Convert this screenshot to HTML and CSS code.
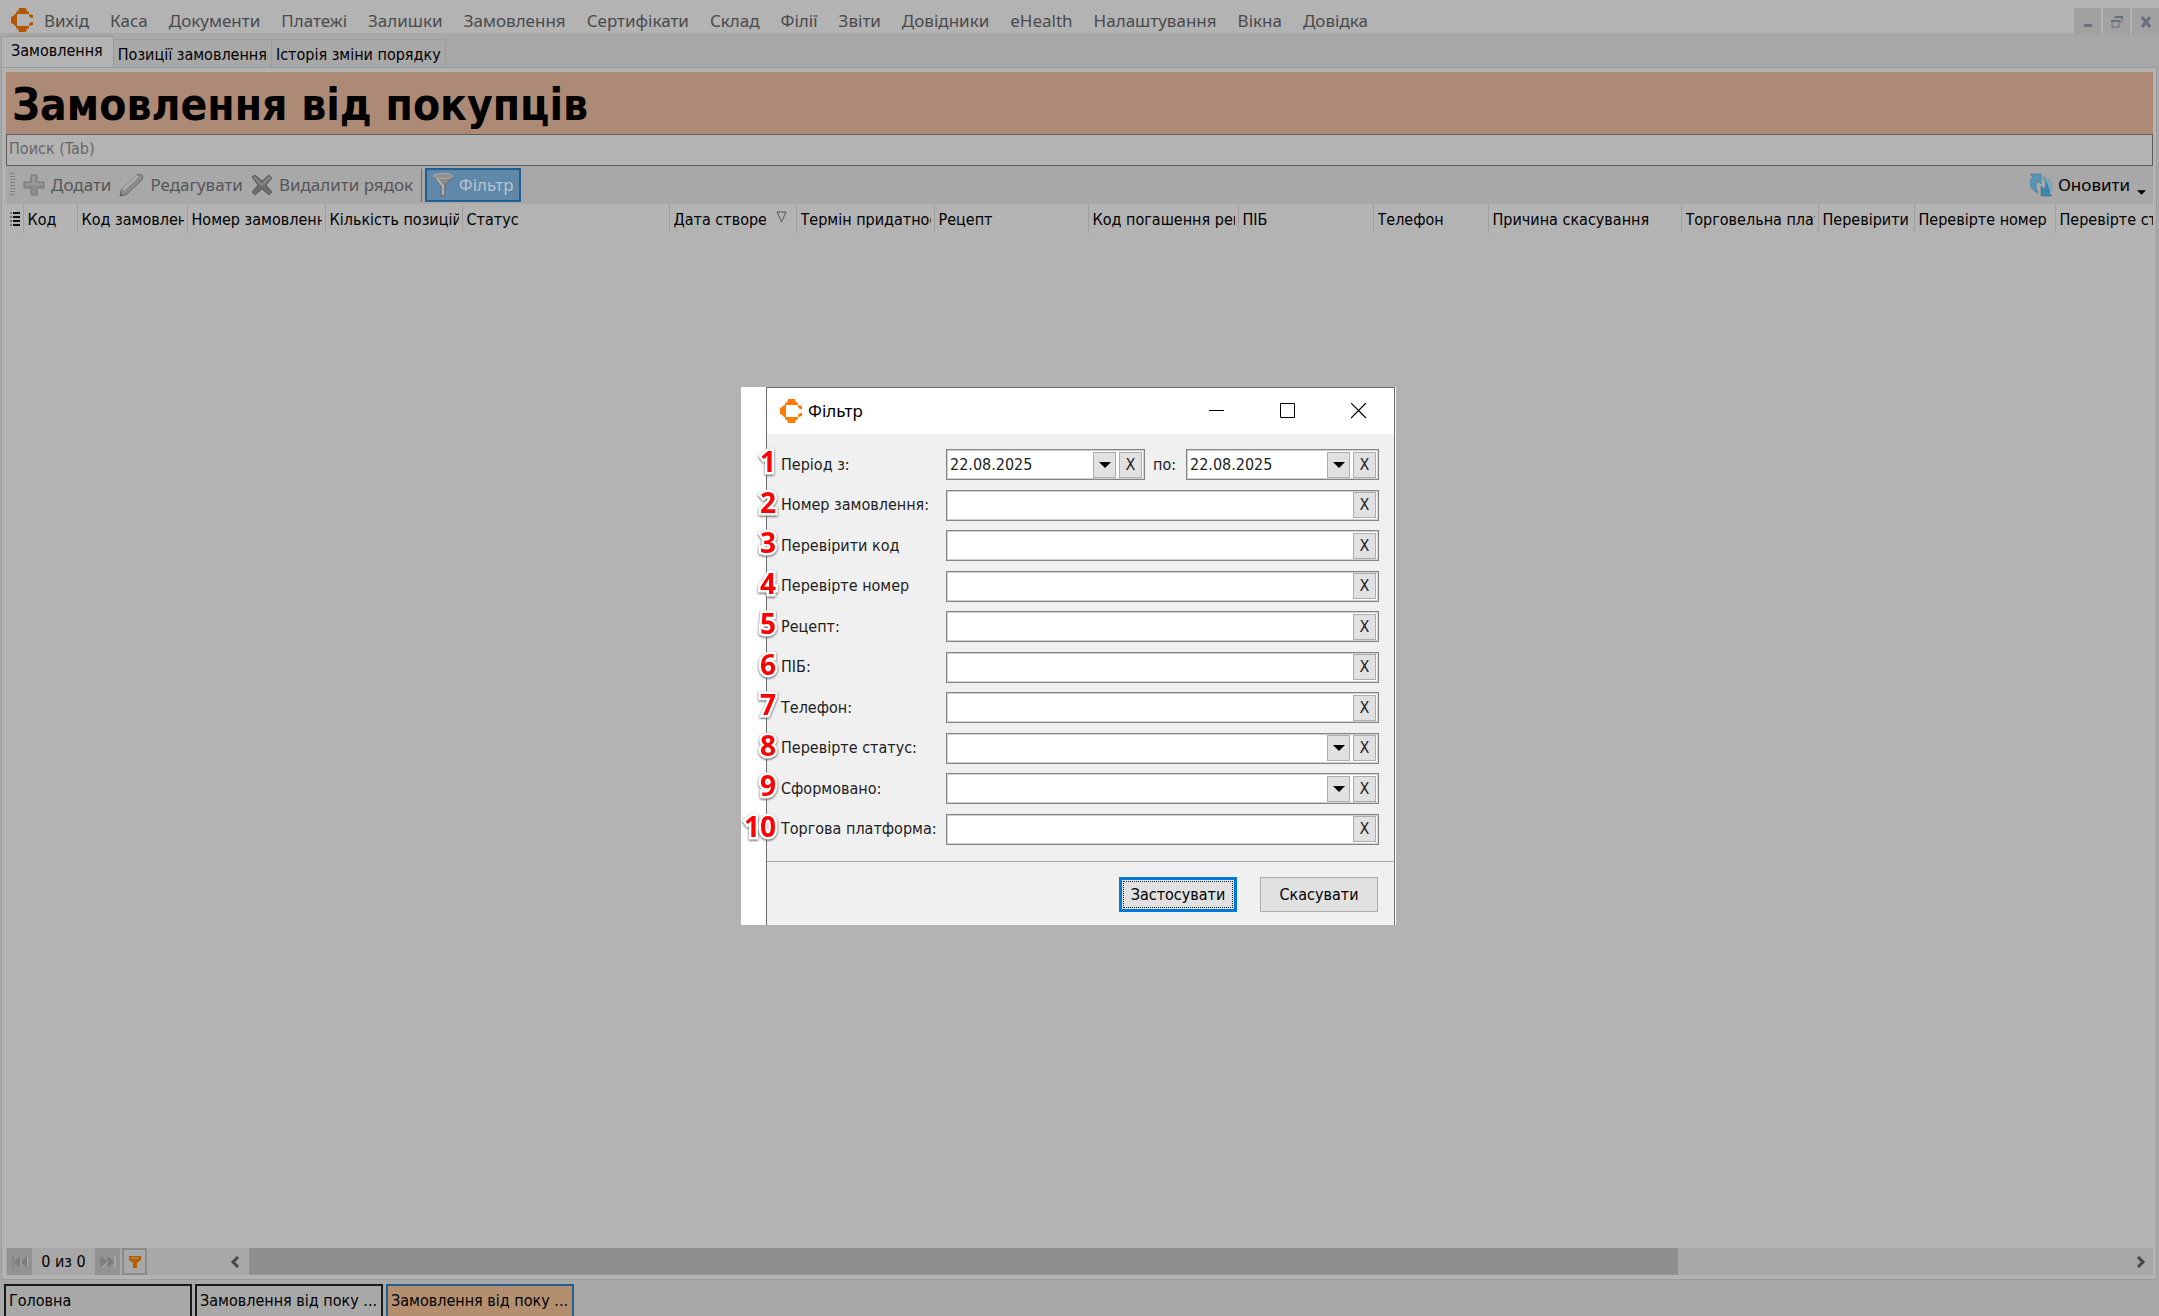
FILE: index.html
```html
<!DOCTYPE html>
<html lang="uk">
<head>
<meta charset="utf-8">
<meta name="viewport" content="width=device-width, initial-scale=1">
<title>Замовлення від покупців</title>
<link rel="stylesheet" href="styles.css">
</head>
<body>
<svg class="defs" aria-hidden="true">
  <symbol id="logo" viewBox="0 0 22 24">
    <path d="M5 6V4Q8 3 8 0h7q0 3 3 4v2zM5 18h13v2q-3 1-3 4H8q0-3-3-4zM6 6v12H4q-1-2-4-3V9q3-1 4-3zM18 6l4 1v3h-2l-2-2zM18 18l4-1v-3h-2l-2 2z"/>
  </symbol>
  <symbol id="caret" viewBox="0 0 12 6"><path d="M0 0h12L6 6z"/></symbol>
</svg>

<div class="app">
  <header class="menubar">
    <svg class="logo logo-dim" aria-hidden="true"><use href="#logo"/></svg>
    <nav class="menu" aria-label="Меню">
      <a href="#">Вихід</a><a href="#">Каса</a><a href="#">Документи</a><a href="#">Платежі</a><a href="#">Залишки</a><a href="#">Замовлення</a><a href="#">Сертифікати</a><a href="#">Склад</a><a href="#">Філії</a><a href="#">Звіти</a><a href="#">Довідники</a><a href="#">eHealth</a><a href="#">Налаштування</a><a href="#">Вікна</a><a href="#">Довідка</a>
    </nav>
    <div class="child-controls">
      <button type="button" aria-label="Згорнути"><svg width="12" height="12" viewBox="0 0 12 12"><path d="M2 8h8v3H2z" fill="#66717c"/></svg></button>
      <button type="button" aria-label="Відновити"><svg width="12" height="12" viewBox="0 0 12 12"><path d="M4 3V1h7v5H9M1 5h7v6H1z" fill="none" stroke="#66717c" stroke-width="1"/><path d="M4 0h8v2H4zM0 4h9v2H0z" fill="#66717c"/></svg></button>
      <button type="button" aria-label="Закрити"><svg width="12" height="12" viewBox="0 0 12 12"><path d="M2 1l8 10M10 1L2 11" stroke="#66717c" stroke-width="3"/></svg></button>
    </div>
  </header>

  <div class="tabs" role="tablist">
    <button class="tab tab-active" type="button" role="tab" aria-selected="true">Замовлення</button>
    <button class="tab" type="button" role="tab">Позиції замовлення</button>
    <button class="tab" type="button" role="tab">Історія зміни порядку</button>
  </div>

  <main class="panel">
    <h1 class="title">Замовлення від покупців</h1>
    <input class="search" type="search" placeholder="Поиск (Tab)" aria-label="Поиск">

    <div class="toolbar">
      <span class="grip"></span>
      <button class="tool" type="button"><svg width="22" height="22" viewBox="0 0 22 22"><path d="M8 1h6v7h7v6h-7v7H8v-7H1V8h7z" fill="#8c8c8c" stroke="#787878"/><path d="M9 2h3v7h8v2H2V9h7z" fill="#999"/></svg>Додати</button>
      <button class="tool" type="button"><svg width="25" height="24" viewBox="0 0 25 24"><path d="M1 23l1-6L18 2q2-2 5 0 2 2 0 5L7 22z" fill="#8a8a8a" stroke="#6e6e6e"/><path d="M4 17L19 3" stroke="#acacac" stroke-width="3"/><path d="M1 23l1-3 2 2z" fill="#555"/></svg>Редагувати</button>
      <button class="tool" type="button"><svg width="22" height="22" viewBox="0 0 22 22"><path d="M1 3l3-2 7 6 7-6 3 3-6 7 6 7-3 3-7-6-7 6-3-3 6-7z" fill="#6c6c6c" stroke="#5e5e5e"/><path d="M3 3l8 8 8-8" fill="none" stroke="#868686" stroke-width="2"/></svg>Видалити рядок</button>
      <span class="divider"></span>
      <button class="tool tool-on" type="button"><svg width="20" height="24" viewBox="0 0 20 24"><path d="M0 3l8 10v10l4-1v-9l8-10z" fill="#8a8a8a" stroke="#5e5e5e" stroke-width=".7"/><path d="M4 6l6 7v9" fill="none" stroke="#b0b0b0" stroke-width="2"/><ellipse cx="10" cy="3" rx="9.500" ry="2.500" fill="#909090" stroke="#b0b0b0"/></svg>Фільтр</button>
      <button class="tool refresh" type="button"><svg width="22" height="24" viewBox="0 0 22 24"><path d="M0 1h11v10L8 8q-4 4 0 12-8-4-8-10 0-3 3-6z" fill="#5a95b8" stroke="#3d7290" stroke-width=".6"/><path d="M22 23H11V13l3 3q4-4-1-12 9 3 9 10 0 3-3 6z" fill="#3c86b0" stroke="#3d7290" stroke-width=".6"/><path d="M13 4q9 3 9 10 0 3-2 5-1-8-7-15z" fill="#83aac0"/></svg>Оновити</button>
      <button class="more" type="button" aria-label="Ще"><svg width="9" height="5"><use href="#caret"/></svg></button>
    </div>

    <div class="grid">
      <table class="orders">
        <colgroup><col class="w17"><col class="w54"><col class="w110"><col class="w138"><col class="w137"><col class="w207"><col class="w127"><col class="w138"><col class="w154"><col class="w150"><col class="w135"><col class="w115"><col class="w193"><col class="w137"><col class="w96"><col class="w141"><col></colgroup>
        <thead>
          <tr>
            <th class="mark"><svg width="10" height="14" viewBox="0 0 10 14"><path d="M3 1h7M3 5h7M3 9h7M3 13h7" stroke="#111" stroke-width="2"/><path d="M0 1h2M0 5h2M0 9h2M0 13h2" stroke="#333"/></svg></th>
            <th><span>Код</span></th><th><span>Код замовлення</span></th><th><span>Номер замовлення</span></th><th><span>Кількість позицій</span></th><th><span>Статус</span></th>
            <th class="sorted"><span>Дата створення</span><svg width="11" height="12" viewBox="0 0 11 12"><path d="M1 1h9L5.500 11z" fill="none" stroke="#555"/></svg></th>
            <th><span>Термін придатності</span></th><th><span>Рецепт</span></th><th><span>Код погашення рецепта</span></th><th><span>ПІБ</span></th><th><span>Телефон</span></th><th><span>Причина скасування</span></th><th><span>Торговельна платформа</span></th><th><span>Перевірити код</span></th><th><span>Перевірте номер</span></th><th class="last"><span>Перевірте статус</span></th>
          </tr>
        </thead>
      </table>
    </div>

    <footer class="pager">
      <button class="nav" type="button" aria-label="На початок"><svg width="16" height="12" viewBox="0 0 16 12"><path d="M1 0v12M8 1L2 6l6 5zM15 1L9 6l6 5z" fill="#7d7d7d" stroke="#7d7d7d"/><path d="M9 1v10M15.500 1v10" stroke="#b0b0b0"/></svg></button>
      <span class="count">0 из 0</span>
      <button class="nav" type="button" aria-label="В кінець"><svg width="16" height="12" viewBox="0 0 16 12"><path d="M1 1l6 5-6 5zM8 1l6 5-6 5z" fill="#7d7d7d" stroke="#7d7d7d"/><path d="M15 0v12M8 6l-7 6" stroke="#b0b0b0"/></svg></button>
      <button class="nav nav-filter" type="button" aria-label="Фільтр"><svg width="12" height="12" viewBox="0 0 12 12"><path d="M0 0h12v4L8 7v5H4V7L0 4z" fill="#b35c00"/><path d="M2 2h8" stroke="#c8a070"/></svg></button>
      <div class="scroll">
        <button class="arrow" type="button" aria-label="Ліворуч"><svg width="10" height="12" viewBox="0 0 10 12"><path d="M8 1L3 6l5 5" fill="none" stroke="#464646" stroke-width="3"/></svg></button>
        <div class="track"><div class="thumb"></div></div>
        <button class="arrow arrow-end" type="button" aria-label="Праворуч"><svg width="10" height="12" viewBox="0 0 10 12"><path d="M2 1l5 5-5 5" fill="none" stroke="#464646" stroke-width="3"/></svg></button>
      </div>
    </footer>
  </main>

  <nav class="windows" aria-label="Вікна">
    <button type="button">Головна</button>
    <button type="button">Замовлення від поку ...</button>
    <button class="current" type="button">Замовлення від поку ...</button>
  </nav>
</div>

<section class="popup" role="dialog" aria-labelledby="filter-title">
  <div class="window">
    <header class="window-bar">
      <svg class="logo" aria-hidden="true"><use href="#logo"/></svg>
      <h2 id="filter-title">Фільтр</h2>
      <button type="button" aria-label="Згорнути"><svg width="16" height="16"><path d="M0 7h15v1H0z"/></svg></button>
      <button type="button" aria-label="Розгорнути"><svg width="16" height="16"><path d="M.5.5h14v14H.5z" fill="none" stroke="#000"/></svg></button>
      <button type="button" aria-label="Закрити"><svg width="16" height="16"><path d="M0 0l15 15M15 0L0 15" stroke="#000" stroke-width="1.200"/></svg></button>
    </header>
    <form class="filter">
      <div class="rows">
        <div class="row"><b class="badge">1</b><label for="from">Період з:</label>
          <div class="field"><input id="from" type="text" value="22.08.2025"><button class="key" type="button" aria-label="Вибрати"><svg width="12" height="6"><use href="#caret"/></svg></button><button class="key" type="button">X</button></div>
          <label class="to" for="to">по:</label>
          <div class="field field-to"><input id="to" type="text" value="22.08.2025"><button class="key" type="button" aria-label="Вибрати"><svg width="12" height="6"><use href="#caret"/></svg></button><button class="key" type="button">X</button></div>
        </div>
        <div class="row"><b class="badge">2</b><label for="number">Номер замовлення:</label><div class="field"><input id="number" type="text"><button class="key" type="button">X</button></div></div>
        <div class="row"><b class="badge">3</b><label for="check-code">Перевірити код</label><div class="field"><input id="check-code" type="text"><button class="key" type="button">X</button></div></div>
        <div class="row"><b class="badge">4</b><label for="check-number">Перевірте номер</label><div class="field"><input id="check-number" type="text"><button class="key" type="button">X</button></div></div>
        <div class="row"><b class="badge">5</b><label for="recipe">Рецепт:</label><div class="field"><input id="recipe" type="text"><button class="key" type="button">X</button></div></div>
        <div class="row"><b class="badge">6</b><label for="person">ПІБ:</label><div class="field"><input id="person" type="text"><button class="key" type="button">X</button></div></div>
        <div class="row"><b class="badge">7</b><label for="phone">Телефон:</label><div class="field"><input id="phone" type="text"><button class="key" type="button">X</button></div></div>
        <div class="row"><b class="badge">8</b><label for="status">Перевірте статус:</label><div class="field"><select id="status"><option></option></select><span class="key"><svg width="12" height="6"><use href="#caret"/></svg></span><button class="key" type="button">X</button></div></div>
        <div class="row"><b class="badge">9</b><label for="formed">Сформовано:</label><div class="field"><select id="formed"><option></option></select><span class="key"><svg width="12" height="6"><use href="#caret"/></svg></span><button class="key" type="button">X</button></div></div>
        <div class="row"><b class="badge">10</b><label for="platform">Торгова платформа:</label><div class="field"><input id="platform" type="text"><button class="key" type="button">X</button></div></div>
      </div>
      <div class="actions">
        <button class="action action-default" type="button"><span>Застосувати</span></button>
        <button class="action" type="button">Скасувати</button>
      </div>
    </form>
  </div>
</section>
</body>
</html>
```
FILE: styles.css
```css
:root {
  --ui: "DejaVu Sans Condensed", "DejaVu Sans", sans-serif;
  --menu: "Noto Sans", "Open Sans", sans-serif;
  --light: #b3b3b3;
  --face: #a8a8a8;
  --line: #9b9b9b;
}

* { box-sizing: border-box; }

body {
  margin: 0;
  background: var(--face);
  color: #000;
  font: 16px/20px var(--ui);
}

button, input, select {
  margin: 0;
  padding: 0;
  border: 0;
  border-radius: 0;
  background: none;
  color: inherit;
  font: inherit;
}

button { display: flex; align-items: center; justify-content: center; }
svg { flex: none; display: block; }
.defs { position: absolute; width: 0; height: 0; }

.app { display: flex; flex-direction: column; min-height: 100vh; overflow: hidden; }

/* Menu bar */
.menubar {
  display: flex;
  align-items: flex-start;
  height: 33px;
  padding: 8px 0 0 11px;
  background: var(--light);
}
.logo { width: 22px; height: 24px; fill: #ff7a00; }
.logo-dim { fill: #b35600; }
.menu { display: flex; gap: 21px; flex: 1; padding-left: 11px; font: 17px/26px var(--menu); }
.menu a { color: #4a4a4a; text-decoration: none; white-space: nowrap; }
.child-controls { display: flex; gap: 2px; }
.child-controls button { width: 27px; height: 27px; background: #a2a2a2; }

/* Tabs */
.tabs { display: flex; align-items: flex-end; height: 34px; padding-left: 1px; }
.tab {
  height: 28px;
  padding: 2px 4px 0;
  border: 1px solid var(--line);
  border-width: 1px 1px 0 0;
  white-space: nowrap;
}
.tab-active {
  height: 31px;
  padding: 0 10px 2px 9px;
  border-left-width: 1px;
  background: var(--light);
}

/* Work panel */
.panel {
  display: flex;
  flex: 1;
  flex-direction: column;
  margin: 0 2px 0 1px;
  padding: 4px 3px 4px 4px;
  border: 1px solid var(--line);
  background: var(--light);
}
.title {
  margin: 0;
  padding: 6px 6px 2px;
  background: #ad8a76;
  font: bold 44px/54px var(--ui);
}
.search {
  width: 100%;
  height: 32px;
  padding: 0 2px 3px;
  border: 1px solid #5c5c5c;
  outline: 0;
  appearance: none;
}
.search::placeholder { color: #666; opacity: 1; }

.toolbar {
  display: flex;
  align-items: center;
  height: 38px;
  padding-left: 4px;
  background: var(--face);
  font: 17px/24px var(--menu);
}
.grip { width: 5px; height: 24px; background: repeating-linear-gradient(#7e7e7e 0 1px, transparent 1px 3px); }
.tool { gap: 6px; height: 34px; margin-left: 8px; color: #565656; white-space: nowrap; }
.divider { width: 1px; height: 33px; margin: 0 3px 0 8px; background: #6c6c6c; }
.tool-on {
  width: 96px;
  margin-left: 0;
  border: 2px solid #1f5f92;
  background: #6088a8;
  color: #b4c4d2;
}
.refresh { margin-left: auto; color: #000; }
.more { width: 23px; height: 34px; padding-top: 14px; }

/* Grid */
.grid { flex: 1; }
.orders { width: 100%; border-collapse: collapse; table-layout: fixed; }
.orders th {
  height: 29px;
  padding: 2px 3px 0 4px;
  border-right: 1px solid #a1a1a1;
  font-weight: normal;
  text-align: left;
}
.orders span { display: block; overflow: hidden; white-space: nowrap; }
.orders .mark { padding: 0 4px; }
.orders .last { padding-right: 0; border-right: 0; }
.orders .sorted { position: relative; padding-right: 30px; }
.sorted svg { position: absolute; top: 7px; right: 9px; }
.w17 { width: 17px; }
.w54 { width: 54px; }
.w96 { width: 96px; }
.w110 { width: 110px; }
.w115 { width: 115px; }
.w127 { width: 127px; }
.w135 { width: 135px; }
.w137 { width: 137px; }
.w138 { width: 138px; }
.w141 { width: 141px; }
.w150 { width: 150px; }
.w154 { width: 154px; }
.w193 { width: 193px; }
.w207 { width: 207px; }

/* Record navigator and scroll bar */
.pager { display: flex; height: 27px; padding-left: 1px; background: var(--face); }
.nav { width: 25px; background: #929292; }
.nav-filter { margin-left: 2px; border: 2px solid #8a8a8a; background: var(--face); }
.count { width: 63px; line-height: 28px; text-align: center; }
.scroll { display: flex; flex: 1; margin-left: 74px; }
.arrow { width: 28px; }
.arrow-end { width: 24px; }
.track { flex: 1; }
.thumb { width: 76%; height: 100%; background: #8f8f8f; }

/* Open windows */
.windows { display: flex; gap: 3px; height: 36px; padding: 4px 4px 0; }
.windows button {
  justify-content: flex-start;
  width: 188px;
  padding: 0 3px;
  border: 2px solid #1a1a1a;
  border-bottom: 0;
  white-space: nowrap;
}
.windows .current { border-color: #24608f; background: #b38f70; }

/* Filter window */
.popup {
  position: absolute;
  top: 387px;
  left: 741px;
  width: 655px;
  padding: 0 1px 0 25px;
  background: #fff;
}
.window { border: 1px solid #6e6e6e; border-bottom: 0; background: #f0f0f0; }
.window-bar { display: flex; align-items: center; height: 46px; padding-left: 13px; background: #fff; }
.window-bar h2 { flex: 1; margin: 0 0 0 6px; font: 17px/24px var(--menu); }
.window-bar button { width: 71px; height: 46px; }

.rows {
  display: flex;
  flex-direction: column;
  justify-content: space-between;
  height: 428px;
  padding: 15px 15px 16px 14px;
  border-bottom: 1px solid #a8a8a8;
}
.row { position: relative; display: flex; align-items: center; color: #222; }
.row label { width: 165px; white-space: nowrap; }
.row .to { width: 41px; padding-left: 8px; }
.field {
  display: flex;
  flex: 1;
  align-items: center;
  gap: 3px;
  height: 31px;
  padding: 0 2px 0 3px;
  border: 1px solid #858585;
  outline: 1px solid #d0d0d0;
  outline-offset: -2px;
  background: #fff;
}
.field-to { flex: 0 0 193px; }
.field input, .field select { flex: 1; width: 0; height: 25px; outline: 0; appearance: none; }
.key {
  display: flex;
  align-items: center;
  justify-content: center;
  width: 23px;
  height: 26px;
  border: 1px solid #adadad;
  background: #e1e1e1;
}
.badge {
  position: absolute;
  right: calc(100% + 5px);
  top: -6px;
  color: #f00;
  font: bold 28px/36px "Open Sans", "Noto Sans", sans-serif;
  paint-order: stroke;
  -webkit-text-stroke: 5px #fff;
  filter: drop-shadow(0 1px 1px #555);
}

.actions { display: flex; justify-content: flex-end; gap: 23px; padding: 15px 16px 13px; }
.action { width: 118px; height: 35px; border: 1px solid #adadad; background: #e1e1e1; }
.action-default { padding: 1px; border: 3px solid #0078d7; }
.action-default span { flex: 1; border: 1px dotted #222; line-height: 25px; }
```
